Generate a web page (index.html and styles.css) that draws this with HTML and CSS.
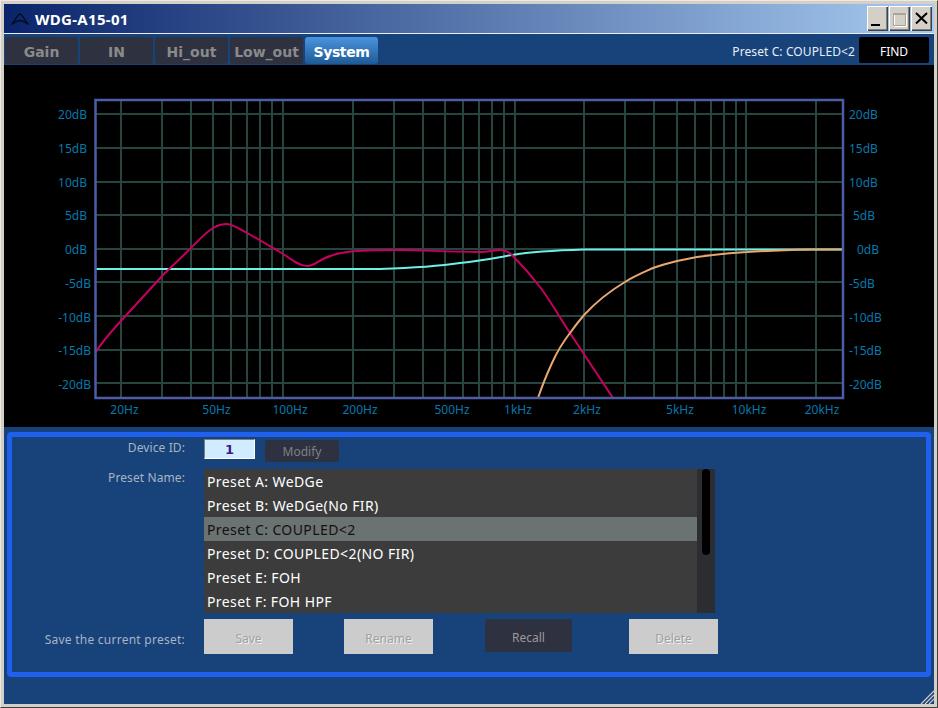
FILE: index.html
```html
<!DOCTYPE html>
<html>

<head>
    <meta charset="utf-8">
    <title>WDG-A15-01</title>
    <link rel="stylesheet" href="styles.css">
</head>

<body>
    <div class="window">
        <div class="titlebar">
            <svg class="app-icon" width="18" height="12" viewBox="0 0 18 12">
                <path d="M0.500 11.500 C3.500 8.500 5.500 3 9 0.800 C12.500 3 14.500 8.500 17.500 11.500 C14.500 9.500 12 7.500 9 7.500 C6 7.500 3.500 9.500 0.500 11.500 Z" fill="none" stroke="#050a20" stroke-width="1.300" />
            </svg>
            <span class="title">WDG-A15-01</span>
            <div class="win-buttons">
                <a class="win-btn">
                    <svg width="21" height="25" viewBox="0 0 21 25"><rect x="4" y="18" width="9" height="2" fill="#000" /></svg>
                </a>
                <a class="win-btn">
                    <svg width="21" height="25" viewBox="0 0 21 25">
                        <path d="M5.500 8.500h12v12h-12z" fill="none" stroke="#fff" />
                        <path d="M4.500 7.500h12v12h-12z M4.500 8.500h12" fill="none" stroke="#a8a49c" />
                    </svg>
                </a>
                <a class="win-btn">
                    <svg width="21" height="25" viewBox="0 0 21 25"><path d="M5 7 L16 17.500 M16 7 L5 17.500" stroke="#000" stroke-width="2" /></svg>
                </a>
            </div>
        </div>

        <div class="toolbar">
            <a class="tab">Gain</a>
            <a class="tab">IN</a>
            <a class="tab">Hi_out</a>
            <a class="tab">Low_out</a>
            <a class="tab active">System</a>
            <span class="current-preset">Preset C: COUPLED&lt;2</span>
            <a class="find">FIND</a>
        </div>

        <div class="chart">
            <svg width="930" height="362" viewBox="4 65 930 362">
                <!-- grid -->
                <path class="grid" d="M121 100V398 M162 100V398 M191 100V398 M213 100V398 M231 100V398 M247 100V398 M260 100V398 M272 100V398 M283 100V398 M353 100V398 M394 100V398 M423 100V398 M445 100V398 M463 100V398 M479 100V398 M492 100V398 M504 100V398 M515 100V398 M584 100V398 M625 100V398 M654 100V398 M677 100V398 M695 100V398 M711 100V398 M724 100V398 M736 100V398 M746 100V398 M816 100V398" />
                <path class="grid" d="M96 114H843 M96 148H843 M96 182H843 M96 215H843 M96 249H843 M96 282H843 M96 316H843 M96 350H843 M96 383H843" />

                <!-- curves -->
                <path class="curve cyan" d="M96 269 L380 269 C410 268 440 266 460 263 C480 261 495 258 512 255 C530 252 550 250.500 584 249.500 L843 249.500" />
                <path class="curve magenta" d="M96 352 C100 345 110 333 120 322 L163 275 L190 249 C198 241 205 233 213 228 C218 225 222 224 227 224 C232 224 240 229 247 233 C258 239 268 245 280 252 C290 258 298 266 307 266 C313 266 317 262 323 259 C331 255 338 253 347 252 C357 250.500 380 250 400 250 C425 250 445 252 480 252 C487 252 494 250 500 250 C505 250 509 252 512 255 C520 263 530 274 540 287 C550 300 560 318 570 333 L613 398" />
                <path class="curve orange" d="M538 398 C542 386 547 374 552 363 C557 352 563 342 570 333 C575 326 579 321 584 315 C596 302 610 291 625 282 C634 276 644 272 653 268 C661 265 669 263 677 261 C689 258 701 256 713 255 C724 253.500 736 252.500 747 252 C769 250.500 791 250 813 249.500 L843 249.500" />

                <rect class="frame" x="95.500" y="100" width="747.500" height="298" />

                <!-- level scale, both sides -->
                <g class="axis end">
                    <text x="87" y="119">20dB</text>
                    <text x="87" y="153">15dB</text>
                    <text x="87" y="187">10dB</text>
                    <text x="87" y="220">5dB</text>
                    <text x="87" y="254">0dB</text>
                    <text x="91" y="288">-5dB</text>
                    <text x="91" y="322">-10dB</text>
                    <text x="91" y="355">-15dB</text>
                    <text x="91" y="389">-20dB</text>
                </g>
                <g class="axis">
                    <text x="849" y="119">20dB</text>
                    <text x="849" y="153">15dB</text>
                    <text x="849" y="187">10dB</text>
                    <text x="853" y="220">5dB</text>
                    <text x="857" y="254">0dB</text>
                    <text x="849" y="288">-5dB</text>
                    <text x="849" y="322">-10dB</text>
                    <text x="849" y="355">-15dB</text>
                    <text x="849" y="389">-20dB</text>
                </g>

                <!-- frequency scale -->
                <g class="axis middle">
                    <text x="124.500" y="414">20Hz</text>
                    <text x="216.500" y="414">50Hz</text>
                    <text x="290" y="414">100Hz</text>
                    <text x="360" y="414">200Hz</text>
                    <text x="452" y="414">500Hz</text>
                    <text x="518" y="414">1kHz</text>
                    <text x="587" y="414">2kHz</text>
                    <text x="680" y="414">5kHz</text>
                    <text x="749" y="414">10kHz</text>
                    <text x="822" y="414">20kHz</text>
                </g>
            </svg>
        </div>

        <div class="panel">
            <div class="panel-box">
                <div class="row id-row">
                    <label>Device ID:</label>
                    <div class="id-value">1</div>
                    <a class="modify">Modify</a>
                </div>
                <div class="row preset-row">
                    <label>Preset Name:</label>
                    <div class="preset-list">
                        <div class="items">
                            <div class="item">Preset A: WeDGe</div>
                            <div class="item">Preset B: WeDGe(No FIR)</div>
                            <div class="item selected">Preset C: COUPLED&lt;2</div>
                            <div class="item">Preset D: COUPLED&lt;2(NO FIR)</div>
                            <div class="item">Preset E: FOH</div>
                            <div class="item">Preset F: FOH HPF</div>
                        </div>
                        <div class="scrollbar">
                            <div class="thumb"></div>
                        </div>
                    </div>
                </div>
                <div class="row action-row">
                    <label>Save the current preset:</label>
                    <div class="actions">
                        <a class="action disabled">Save</a>
                        <a class="action disabled">Rename</a>
                        <a class="action recall">Recall</a>
                        <a class="action disabled">Delete</a>
                    </div>
                </div>
            </div>
            <svg class="grip" width="14" height="14" viewBox="0 0 14 14">
                <path d="M14 1 L1 14 M14 5 L5 14 M14 9 L9 14" stroke="#d4d0c8" stroke-width="1.200" />
            </svg>
        </div>
    </div>
</body>

</html>
```

FILE: styles.css
```css
html,
body {
    margin: 0;
    padding: 0;
}

body {
    width: 938px;
    height: 708px;
    overflow: hidden;
    font-family: "Noto Sans", sans-serif;
}

a {
    text-decoration: none;
    cursor: pointer;
}

.window {
    box-sizing: border-box;
    width: 938px;
    height: 708px;
    padding: 3px 3px 3px 3px;
    background: #d4d0c8;
    display: flex;
    flex-direction: column;
    border-right: 1px solid #404040;
    border-bottom: 1px solid #404040;
    border-top: 1px solid #ece9e2;
    border-left: 1px solid #ece9e2;
}

.titlebar {
    flex: 0 0 29px;
    display: flex;
    align-items: center;
    padding-left: 7px;
    background: linear-gradient(to right, #0a246a, #a6caf0);
    border-bottom: 1px solid #e8eef6;
}

.app-icon {
    margin-right: 6px;
}

.title {
    font-size: 15px;
    font-weight: bold;
    letter-spacing: 0.3px;
    color: #fff;
}

.win-buttons {
    margin-left: auto;
    margin-right: 2px;
    display: flex;
    gap: 1px;
}

.win-btn {
    width: 21px;
    height: 25px;
    display: block;
    background: #d4d0c8;
    box-shadow: inset 1px 1px 0 #fff, inset -1px -1px 0 #404040, inset -2px -2px 0 #808080;
}

.win-btn svg {
    display: block;
}

.toolbar {
    flex: 0 0 31px;
    display: flex;
    align-items: center;
    gap: 2px;
    background: #17427a;
    padding: 0 5px 0 1px;
}

.tab {
    box-sizing: border-box;
    width: 73px;
    height: 27px;
    line-height: 31px;
    margin-top: 1px;
    text-align: center;
    font-family: "DejaVu Sans", sans-serif;
    font-size: 14px;
    font-weight: bold;
    color: #8a8a8a;
    background: #2e3140;
    border-radius: 3px;
}

.tab.active {
    letter-spacing: -0.4px;
    color: #fff;
    background: linear-gradient(to bottom, #4a94de, #1f5a96);
}

.current-preset {
    margin-left: auto;
    margin-right: 2px;
    padding-top: 4px;
    font-size: 12px;
    letter-spacing: 0.1px;
    color: #e8eef6;
}

.find {
    width: 70px;
    height: 26px;
    line-height: 29px;
    text-align: center;
    font-size: 12px;
    color: #fff;
    background: #000;
    border-radius: 2px;
}

.chart {
    flex: 0 0 362px;
    background: #000;
}

.chart svg {
    display: block;
}

.grid {
    stroke: #264440;
    stroke-width: 2;
    fill: none;
}

.frame {
    fill: none;
    stroke: #4d5ca6;
    stroke-width: 2.500;
}

.curve {
    fill: none;
    stroke-width: 2;
}

.cyan {
    stroke: #6ef0e6;
}

.magenta {
    stroke: #c8005e;
}

.orange {
    stroke: #e8a870;
}

.axis text {
    font-size: 12px;
    fill: #0679ad;
}

.axis.end text {
    text-anchor: end;
}

.axis.middle text {
    text-anchor: middle;
}

.panel {
    flex: 1;
    position: relative;
    background: #17427a;
    padding: 5px 3px 0 3px;
}

.panel-box {
    box-sizing: border-box;
    height: 245px;
    padding-top: 2px;
    border: 5px solid #2060ee;
    border-radius: 4px;
}

.row {
    display: flex;
    align-items: flex-start;
}

.row label {
    width: 173px;
    margin-right: 19px;
    text-align: right;
    font-size: 12px;
    line-height: 18px;
    letter-spacing: 0.1px;
    color: #a8b4c4;
}

.id-row {
    height: 23px;
}

.id-value {
    box-sizing: border-box;
    width: 51px;
    height: 20px;
    line-height: 19px;
    text-align: center;
    font-family: "DejaVu Sans", sans-serif;
    font-size: 13px;
    font-weight: bold;
    color: #3a1a8c;
    background: #d0ecff;
    border: 1px solid;
    border-color: #808080 #fff #fff #808080;
}

.modify {
    width: 74px;
    height: 22px;
    line-height: 24px;
    margin: 1px 0 0 10px;
    text-align: center;
    font-size: 12px;
    color: #808080;
    background: #2e3140;
    border-radius: 3px;
}

.preset-row {
    margin-top: 7px;
}

.preset-list {
    display: flex;
    width: 511px;
    height: 144px;
    background: #3c3c3c;
}

.items {
    flex: 1;
    overflow: hidden;
}

.item {
    height: 24px;
    line-height: 26px;
    padding-left: 3px;
    font-size: 14px;
    letter-spacing: 0.4px;
    color: #fff;
}

.item.selected {
    color: #111;
    background: #6b7272;
}

.scrollbar {
    width: 18px;
    background: #2c2d31;
    display: flex;
    justify-content: center;
    align-items: flex-start;
}

.thumb {
    width: 8px;
    height: 86px;
    background: #000;
    border-radius: 4px;
}

.action-row {
    margin-top: 6px;
}

.action-row label {
    margin-top: 12px;
    letter-spacing: 0.25px;
}

.actions {
    display: flex;
    align-items: flex-start;
}

.action {
    width: 89px;
    height: 35px;
    line-height: 39px;
    margin-right: 51px;
    text-align: center;
    font-size: 12px;
}

.action.disabled {
    color: #a0a0a0;
    background: #cccccc;
    text-shadow: 1px 1px 0 #f0f0f0;
}

.action.recall {
    width: 87px;
    height: 33px;
    line-height: 37px;
    margin: 0 57px 0 1px;
    color: #9a9a9a;
    background: #2e3140;
    border-radius: 3px;
}

.grip {
    position: absolute;
    right: 0;
    bottom: 0;
}
```
